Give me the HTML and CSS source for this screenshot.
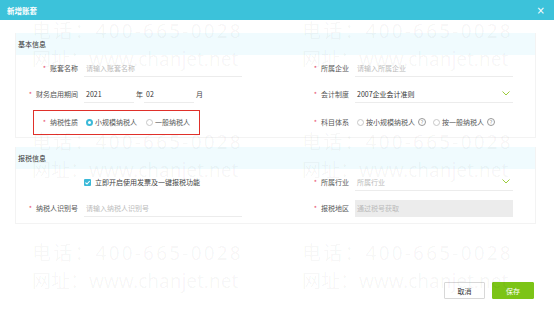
FILE: index.html
```html
<!DOCTYPE html>
<html lang="zh-CN">
<head>
    <meta charset="UTF-8">
    <meta name="viewport" content="width=device-width, initial-scale=1.0">
    <title>新增账套</title>
    <link rel="stylesheet" href="styles.css">
</head>
<body>
    <div class="dialog">
        <div class="dialog-head">
            <span class="title">新增账套</span>
            <span class="close">×</span>
        </div>

        <div class="dialog-body">
            <!-- 基本信息 -->
            <div class="panel first">
                <div class="panel-title">基本信息</div>
                <div class="row">
                    <div class="field">
                        <label class="label req">账套名称</label>
                        <div class="input"><span class="ph">请输入账套名称</span></div>
                    </div>
                    <div class="field">
                        <label class="label req">所属企业</label>
                        <div class="input"><span class="ph">请输入所属企业</span></div>
                    </div>
                </div>
                <div class="row">
                    <div class="field">
                        <label class="label req">财务启用期间</label>
                        <div class="period">
                            <div class="input short">2021</div>
                            <span class="unit">年</span>
                            <div class="input short">02</div>
                            <span class="unit">月</span>
                        </div>
                    </div>
                    <div class="field">
                        <label class="label req">会计制度</label>
                        <div class="input select">
                            <span>2007企业会计准则</span>
                            <svg class="chevron" width="8" height="5" viewBox="0 0 8 5"><path d="M0.5 0.5 L4 4 L7.5 0.5" fill="none" stroke="#9ccc3c" stroke-width="1"/></svg>
                        </div>
                    </div>
                </div>
                <div class="row tall">
                    <div class="field marked">
                        <label class="label req">纳税性质</label>
                        <div class="choices">
                            <span class="radio on"></span><span class="opt">小规模纳税人</span>
                            <span class="radio"></span><span class="opt">一般纳税人</span>
                        </div>
                    </div>
                    <div class="field">
                        <label class="label req">科目体系</label>
                        <div class="choices">
                            <span class="radio"></span><span class="opt">按小规模纳税人</span><span class="help">?</span>
                            <span class="radio"></span><span class="opt">按一般纳税人</span><span class="help">?</span>
                        </div>
                    </div>
                </div>
            </div>

            <!-- 报税信息 -->
            <div class="panel">
                <div class="panel-title">报税信息</div>
                <div class="row">
                    <div class="field">
                        <span class="label"></span>
                        <div class="check-line">
                            <span class="checkbox">
                                <svg width="7" height="7" viewBox="0 0 7 7"><path d="M1.4 3.6 L3 5 L5.7 2" fill="none" stroke="#fff" stroke-width="1.1"/></svg>
                            </span>
                            <span>立即开启使用发票及一键报税功能</span>
                        </div>
                    </div>
                    <div class="field">
                        <label class="label req">所属行业</label>
                        <div class="input select">
                            <span class="ph">所属行业</span>
                            <svg class="chevron" width="8" height="5" viewBox="0 0 8 5"><path d="M0.5 0.5 L4 4 L7.5 0.5" fill="none" stroke="#9ccc3c" stroke-width="1"/></svg>
                        </div>
                    </div>
                </div>
                <div class="row">
                    <div class="field">
                        <label class="label req">纳税人识别号</label>
                        <div class="input"><span class="ph">请输入纳税人识别号</span></div>
                    </div>
                    <div class="field">
                        <label class="label req">报税地区</label>
                        <div class="input disabled"><span class="ph">通过税号获取</span></div>
                    </div>
                </div>
            </div>
        </div>

        <div class="dialog-foot">
            <button class="btn">取消</button>
            <button class="btn primary">保存</button>
        </div>

        <!-- watermark -->
        <div class="watermark">
            <div class="wm"><div class="tel">电话：400-665-0028</div><div>网址：www.chanjet.net</div></div>
            <div class="wm"><div class="tel">电话：400-665-0028</div><div>网址：www.chanjet.net</div></div>
            <div class="wm"><div class="tel">电话：400-665-0028</div><div>网址：www.chanjet.net</div></div>
            <div class="wm"><div class="tel">电话：400-665-0028</div><div>网址：www.chanjet.net</div></div>
            <div class="wm"><div class="tel">电话：400-665-0028</div><div>网址：www.chanjet.net</div></div>
            <div class="wm"><div class="tel">电话：400-665-0028</div><div>网址：www.chanjet.net</div></div>
        </div>
    </div>
</body>
</html>
```

FILE: styles.css
```css
body {
    margin: 0;
    padding: 0;
    background: #fff;
    font-family: "Noto Sans CJK SC", "Noto Sans", sans-serif;
    font-size: 7px;
    color: #444;
    overflow: hidden;
}

.dialog {
    position: relative;
    width: 554px;
    height: 312px;
    overflow: hidden;
}

.dialog-head {
    height: 20px;
    background: #3cc2da;
    display: flex;
    align-items: center;
    justify-content: space-between;
    padding: 0 9px 0 7px;
    color: #fff;
}

.title {
    font-size: 7.5px;
    font-weight: bold;
}

.close {
    font-family: "DejaVu Sans", sans-serif;
    font-size: 10px;
}

.dialog-body {
    padding: 13px 0 0 15px;
}

.panel {
    width: 519px;
    border: 1px solid #f3f3f3;
    border-top: none;
    padding-bottom: 2px;
}

.panel.first {
    margin-bottom: 9px;
}

.panel-title {
    height: 22px;
    line-height: 22px;
    background: #f0fbfe;
    padding-left: 2px;
    color: #333;
}

.row {
    display: grid;
    grid-template-columns: 271px 248px;
    height: 26px;
    align-items: center;
}

.row.tall {
    padding-top: 2px;
}

.field {
    display: flex;
    align-items: center;
}

.label {
    width: 62px;
    flex-shrink: 0;
    text-align: right;
    color: #555;
    margin-right: 6px;
}

.req::before {
    content: "*";
    color: #e8516a;
    margin-right: 4px;
}

.input {
    width: 158px;
    height: 17px;
    padding-left: 2px;
    border-bottom: 1px solid #ececec;
    display: flex;
    align-items: center;
    color: #333;
    box-sizing: border-box;
}

.ph {
    color: #bbb;
}

.select {
    justify-content: space-between;
    padding-right: 3px;
}

.disabled {
    background: #ececec;
    border-bottom: none;
}

.period {
    display: flex;
    align-items: center;
}

.input.short {
    width: 50px;
}

.unit {
    margin: 0 2px 0 2px;
    color: #444;
    width: 6px;
}

.choices {
    display: flex;
    align-items: center;
    margin-left: 2px;
}

.radio {
    width: 7px;
    height: 7px;
    border: 1px solid #c8c8c8;
    border-radius: 50%;
    box-sizing: border-box;
    margin-right: 2px;
}

.radio.on {
    border: 2px solid #3bb9d8;
}

.opt {
    margin-right: 9px;
    color: #555;
}

.help {
    width: 6px;
    height: 6px;
    border: 1px solid #999;
    border-radius: 50%;
    font-family: "DejaVu Sans", sans-serif;
    font-size: 5px;
    line-height: 6px;
    text-align: center;
    color: #888;
    margin: 0 7px 0 -6px;
}

.marked {
    position: relative;
}

.marked::after {
    content: "";
    position: absolute;
    left: 17px;
    top: -7px;
    width: 167px;
    height: 25px;
    border: 1.5px solid #e0302a;
    box-sizing: border-box;
}

.check-line {
    display: flex;
    align-items: center;
    color: #444;
}

.checkbox {
    width: 7px;
    height: 7px;
    background: #3bb9d8;
    border-radius: 1px;
    margin-right: 4px;
    display: flex;
}

.dialog-foot {
    display: flex;
    justify-content: flex-end;
    gap: 7px;
    padding: 58px 20px 0 0;
}

.btn {
    width: 41px;
    height: 17px;
    padding: 0;
    font-family: inherit;
    font-size: 7px;
    border: 1px solid #d8d8d8;
    border-radius: 1px;
    background: #fff;
    color: #333;
}

.btn.primary {
    width: 42px;
    background: #7cc416;
    border-color: #7cc416;
    color: #fff;
}

/* watermark */
.watermark {
    position: absolute;
    top: 17px;
    left: 32px;
    display: grid;
    grid-template-columns: 270px 270px;
    grid-auto-rows: 111px;
    pointer-events: none;
    font-family: "Noto Sans", "Noto Sans CJK SC", sans-serif;
    font-size: 19px;
    line-height: 28px;
    color: rgba(0, 0, 0, 0.045);
    white-space: nowrap;
}

.wm .tel {
    letter-spacing: 2.2px;
}
```
